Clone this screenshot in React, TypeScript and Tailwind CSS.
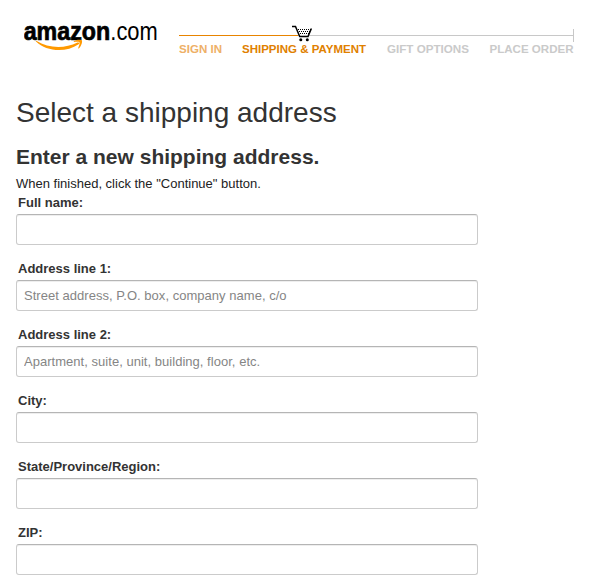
import React from "react";

interface Field {
    id: string;
    label: string;
    placeholder?: string;
}

const fields: Field[] = [
    { id: "fullName", label: "Full name:" },
    { id: "address1", label: "Address line 1:", placeholder: "Street address, P.O. box, company name, c/o" },
    { id: "address2", label: "Address line 2:", placeholder: "Apartment, suite, unit, building, floor, etc." },
    { id: "city", label: "City:" },
    { id: "state", label: "State/Province/Region:" },
    { id: "zip", label: "ZIP:" },
];

const Logo = () => (
    <svg className="block shrink-0" width="150" height="50" viewBox="0 0 150 50" aria-label="amazon.com">
        <text x="-0.3" y="34.5" fontSize="26" fontWeight="700" textLength="86.5" lengthAdjust="spacingAndGlyphs" fill="#000" stroke="#000" strokeWidth="0.7">
            amazon
        </text>
        <text x="86.3" y="34.5" fontSize="26" textLength="47.5" lengthAdjust="spacingAndGlyphs" fill="#000">
            .com
        </text>
        {/* smile */}
        <path d="M12.3 35.8C24.5 43.4 40 44.2 53.5 37.6C55 36.9 56 38.1 54.6 39.2C42 48 22.5 46.8 12 36.5C11.6 36 11.9 35.6 12.3 35.8Z" fill="#f90" />
        <path d="M49.7 36.5C51.5 34.8 55.8 34.3 57.8 35.2C58.8 37 57 41.5 54.8 43.5C54.2 43.7 54 43.5 54.3 42.8C55.2 40.5 56 38 55.4 37.2C54.6 36.5 51.6 36.8 50.2 37C49.6 37.1 49.4 36.8 49.7 36.5Z" fill="#f90" />
    </svg>
);

const CartIcon = () => (
    <svg className="absolute left-[113px] top-0" width="22" height="17" viewBox="0 0 22 17">
        <path d="M4 3H20L16 12H8Z" fill="#fff" />
        <path d="M0 1.5H3.5L7.7 11.5H16L19.4 3.5" fill="none" stroke="#000" strokeWidth="1.5" />
        {/* mesh of the basket */}
        <path d="M6 4.5H20M7 6.5H18.5M8 8.5H17.5" fill="none" stroke="#000" strokeWidth="1" strokeDasharray="1 1" />
        <circle cx="8.8" cy="14.7" r="1.5" />
        <circle cx="15.3" cy="14.7" r="1.5" />
    </svg>
);

const ProgressBar = () => (
    <div className="relative w-[395px] pt-[4px]">
        <div className="flex h-[13px] items-center">
            <div className="h-px w-[119px] bg-[#e88400]" />
            <div className="h-px flex-1 bg-[#c8c8c8]" />
            <div className="h-[13px] w-px bg-[#c8c8c8]" />
        </div>
        <svg className="block" width="400" height="22" fontSize="11.5" fontWeight="700">
            <text x="0" y="11" textLength="43" lengthAdjust="spacingAndGlyphs" fill="#eeb067">SIGN IN</text>
            <text x="63" y="11" textLength="124" lengthAdjust="spacingAndGlyphs" fill="#e08000">SHIPPING &amp; PAYMENT</text>
            <text x="208" y="11" textLength="82" lengthAdjust="spacingAndGlyphs" fill="#cacaca">GIFT OPTIONS</text>
            <text x="310.5" y="11" textLength="84" lengthAdjust="spacingAndGlyphs" fill="#cacaca">PLACE ORDER</text>
        </svg>
        <CartIcon />
    </div>
);

const AddressField = ({ id, label, placeholder }: Field) => (
    <div className="h-[66px]">
        <label htmlFor={id} className="block h-[19px] pl-[2px] text-[13px] leading-[19px] font-bold">
            {label}
        </label>
        <input
            id={id}
            type="text"
            placeholder={placeholder}
            className="mt-[2px] block h-[31px] w-[462px] rounded-[3px] border border-[#cbcbcb] border-t-[#b5b5b5] bg-white px-[7px] text-[13px] shadow-[inset_0_1px_0_#eeeeee] outline-none placeholder:tracking-[0.03px] placeholder:text-[#858585]"
        />
    </div>
);

const App = () => {
    return (
        <div className="h-[588px] overflow-hidden bg-white font-['Liberation_Sans',Arial,sans-serif] text-[#333]">
            <header className="flex h-[94px] pl-[24px]">
                <div className="w-[155px] pt-[5px]">
                    <Logo />
                </div>
                <div className="pt-[25px]">
                    <ProgressBar />
                </div>
            </header>
            <main className="pl-[16px]">
                <h1 className="h-[36px] text-[28px] leading-[37px] whitespace-nowrap">Select a shipping address</h1>
                <h2 className="mt-[13px] h-[28px] text-[21px] leading-[28px] font-bold">Enter a new shipping address.</h2>
                <p className="mt-[3px] h-[19px] text-[13px] leading-[19px] text-[#222]">
                    When finished, click the "Continue" button.
                </p>
                <form>
                    {fields.map((field) => (
                        <AddressField key={field.id} {...field} />
                    ))}
                </form>
            </main>
        </div>
    );
};

export default App;
